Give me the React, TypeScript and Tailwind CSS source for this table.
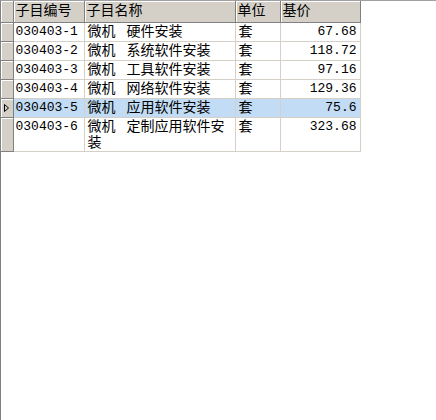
const rows = [
  { code: '030403-1', pre: '微机', name: '硬件安装', unit: '套', price: '67.68' },
  { code: '030403-2', pre: '微机', name: '系统软件安装', unit: '套', price: '118.72' },
  { code: '030403-3', pre: '微机', name: '工具软件安装', unit: '套', price: '97.16' },
  { code: '030403-4', pre: '微机', name: '网络软件安装', unit: '套', price: '129.36' },
  { code: '030403-5', pre: '微机', name: '应用软件安装', unit: '套', price: '75.6' },
  { code: '030403-6', pre: '微机', name: '定制应用软件安装', unit: '套', price: '323.68' },
];

const selected = 4;

const HeadCell = ({ w, children }: { w: string; children?: React.ReactNode }) => (
  <th
    className={`${w} h-[21px] p-0 pl-[2px] text-left font-normal align-middle bg-[#d4d0c8] border-r border-r-[#808080] border-b border-b-[#808080] shadow-[inset_1px_1px_0_#ffffff]`}
  >
    {children}
  </th>
);

export default function App() {
  return (
    <div className="w-[436px] h-[420px] bg-white border-l border-l-[#808080] border-t border-t-[#a0a0a0] overflow-hidden">
      <table
        className="border-collapse table-fixed text-black"
        style={{ fontFamily: '"Liberation Mono", "Noto Sans CJK SC", monospace' }}
      >
        <thead className="text-[14px]">
          <tr>
            <HeadCell w="w-[12px]" />
            <HeadCell w="w-[71px]">子目编号</HeadCell>
            <HeadCell w="w-[151px]">子目名称</HeadCell>
            <HeadCell w="w-[45px]">单位</HeadCell>
            <HeadCell w="w-[80px]">基价</HeadCell>
          </tr>
        </thead>
        <tbody className="leading-[16px]">
          {rows.map((r, i) => {
            const sel = i === selected;
            const cell = `h-[19px] p-0 pt-[1px] align-top border-r border-b border-[#d4d0c8] ${sel ? 'bg-[#c1dcf4]' : 'bg-white'}`;
            return (
              <tr key={r.code}>
                <td className="p-0 align-top bg-[#d4d0c8] border-r border-r-[#808080] border-b border-b-[#808080] shadow-[inset_1px_1px_0_#ffffff]">
                  {sel && (
                    <svg width="11" height="18" viewBox="0 0 11 18" className="block">
                      <path d="M3.5 5.5 L7.5 9 L3.5 12.5 Z" fill="none" stroke="#000" strokeWidth="1" />
                    </svg>
                  )}
                </td>
                <td className={`${cell} pl-[2px] text-[13px] whitespace-nowrap`}>{r.code}</td>
                <td className={`${cell} pl-[3px] text-[14px] break-all`}>
                  {r.pre}
                  <span className="inline-block w-[11px]" />
                  {r.name}
                </td>
                <td className={`${cell} pl-[3px] text-[14px]`}>{r.unit}</td>
                <td className={`${cell} pr-[3px] text-[13px] text-right`}>{r.price}</td>
              </tr>
            );
          })}
        </tbody>
      </table>
    </div>
  );
}
